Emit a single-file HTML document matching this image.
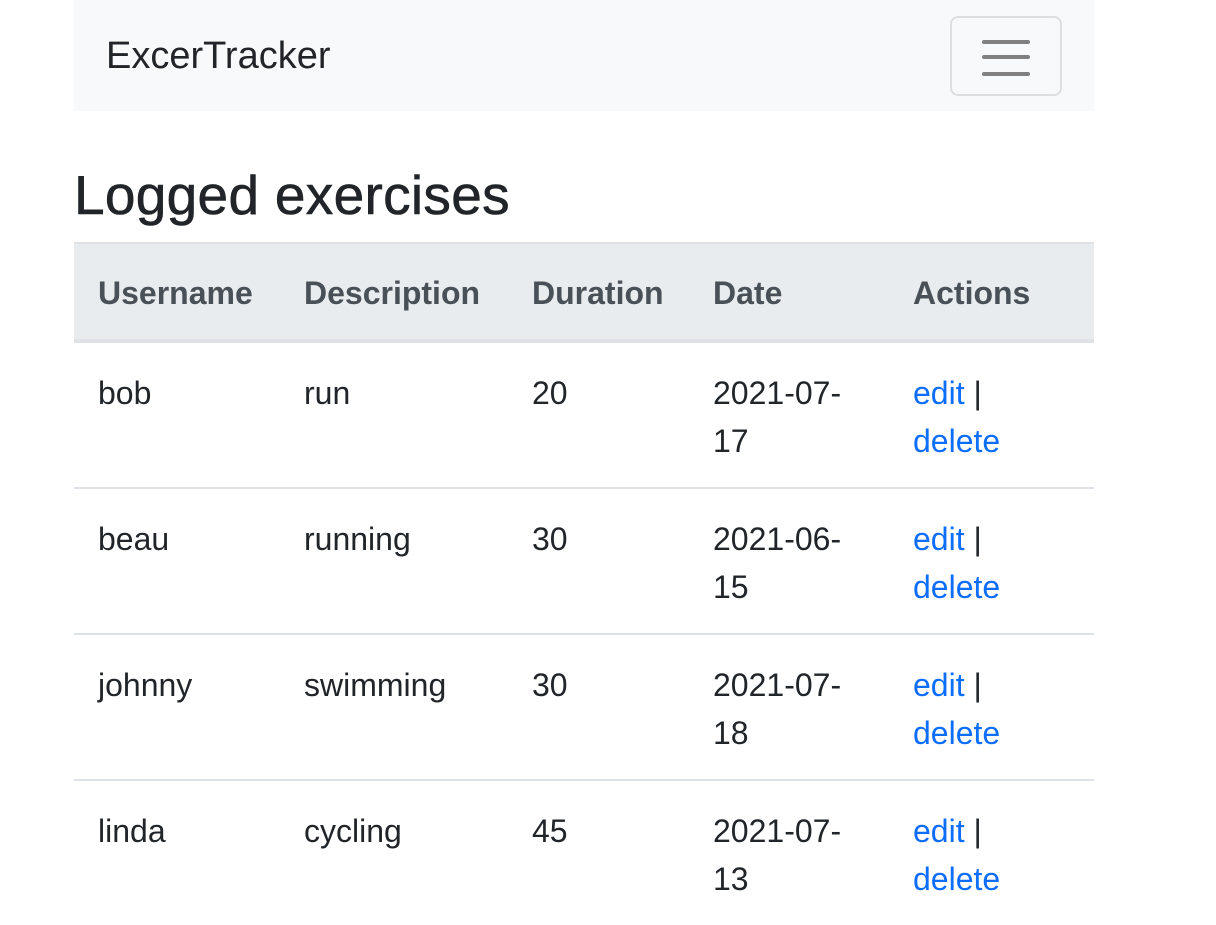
<!DOCTYPE html>
<html><head><meta charset="utf-8"><style>
body{margin:0;background:#fff;font-family:"Liberation Sans",Helvetica,Arial,sans-serif;color:#212529;}
.nav{position:absolute;left:74px;top:0;width:1020px;height:111px;background:#f8f9fa;}
.brand{position:absolute;left:32px;top:32px;font-size:38px;line-height:48px;color:#212529;}
.tog{position:absolute;left:876px;top:16px;width:108px;height:76px;border:2px solid #dcdee0;border-radius:8px;box-sizing:content-box;}
.tog i{position:absolute;left:30px;width:48px;height:4px;border-radius:2px;background:#808080;}
h3{position:absolute;left:74px;top:162px;margin:0;font-size:55px;font-weight:500;line-height:66px;letter-spacing:0.3px;-webkit-text-stroke:0.6px #212529;}
table{position:absolute;left:74px;top:242px;width:1020px;border-collapse:collapse;font-size:32px;line-height:48px;}
th,td{padding:26px 24px 22px;text-align:left;vertical-align:top;border-top:2px solid #dee2e6;}
th{background:#e9ecef;color:#495057;font-weight:bold;border-bottom:4px solid #dee2e6;padding-top:25px;padding-bottom:22px;}
a{color:#0d6efd;text-decoration:none;}
</style></head><body>
<div class="nav"><div class="brand">ExcerTracker</div>
<div class="tog"><i style="top:22px"></i><i style="top:37px"></i><i style="top:54px"></i></div></div>
<h3>Logged exercises</h3>
<table>
<colgroup><col style="width:206px"><col style="width:228px"><col style="width:181px"><col style="width:200px"><col style="width:205px"></colgroup>
<tr><th>Username</th><th>Description</th><th>Duration</th><th>Date</th><th>Actions</th></tr>
<tr><td>bob</td><td>run</td><td>20</td><td>2021-07-<br>17</td><td><a>edit</a> |<br><a>delete</a></td></tr>
<tr><td>beau</td><td>running</td><td>30</td><td>2021-06-<br>15</td><td><a>edit</a> |<br><a>delete</a></td></tr>
<tr><td>johnny</td><td>swimming</td><td>30</td><td>2021-07-<br>18</td><td><a>edit</a> |<br><a>delete</a></td></tr>
<tr><td>linda</td><td>cycling</td><td>45</td><td>2021-07-<br>13</td><td><a>edit</a> |<br><a>delete</a></td></tr>
</table>
</body></html>
